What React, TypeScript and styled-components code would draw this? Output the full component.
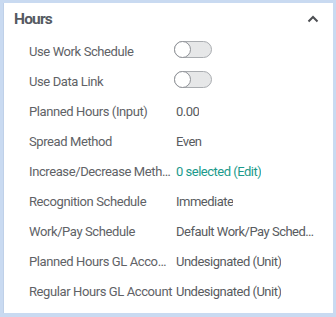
import React from 'react';
import styled, { createGlobalStyle } from 'styled-components';

const GlobalStyle = createGlobalStyle`
  html, body {
    margin: 0;
    padding: 0;
    background: #c9daf1;
  }
  body {
    font-family: Roboto, 'Liberation Sans', Arial, sans-serif;
  }
`;

// Outer frame, the blue around the card
const Frame = styled.div`
  padding: 3px;
  width: 336px;
  height: 317px;
  box-sizing: border-box;
`;

const Card = styled.section`
  background: #fff;
  height: 310px;
  box-sizing: border-box;
  border-left: 1px solid #bfd0e8;
  display: flex;
  flex-direction: column;
`;

const Header = styled.header`
  display: flex;
  align-items: center;
  justify-content: space-between;
  height: 33px;
  padding: 0 14px 0 10px;
`;

const Title = styled.h2`
  margin: 0;
  font-size: 15.5px;
  letter-spacing: -0.8px;
  font-weight: 700;
  color: #555a62;
  line-height: 1;
`;

const Chevron = styled.svg`
  width: 12px;
  height: 8px;
  margin-top: -2px;
`;

const Fields = styled.dl`
  margin: 0;
  padding: 0 15px 0 25px;
  display: grid;
  grid-template-columns: 147px 1fr;
  grid-auto-rows: 30px;
`;

const Label = styled.dt`
  font-size: 13px;
  letter-spacing: -0.4px;
  color: #606266;
  display: flex;
  align-items: center;
  padding-top: 1px;
  min-width: 0;
  span {
    white-space: nowrap;
    overflow: hidden;
    text-overflow: ellipsis;
    padding-right: 4px;
  }
`;

const Value = styled.dd<{ $link?: boolean }>`
  margin: 0;
  font-size: 13px;
  letter-spacing: -0.5px;
  color: ${p => (p.$link ? '#1b9a8b' : '#585b60')};
  display: flex;
  align-items: center;
  min-width: 0;
  span {
    white-space: nowrap;
    overflow: hidden;
    text-overflow: ellipsis;
  }
`;

const Toggle = styled.div`
  position: relative;
  width: 38px;
  height: 17px;
  box-sizing: border-box;
  border: 1px solid #a9acb0;
  border-radius: 9px;
  background: #e6e7e8;
  margin: -4px 0 0 -2px;
  &::before {
    content: '';
    position: absolute;
    left: -1px;
    top: -1px;
    width: 17px;
    height: 17px;
    box-sizing: border-box;
    border-radius: 50%;
    background: #fff;
    border: 1px solid #8e9196;
  }
`;

type Row = { label: string; value?: string; toggle?: boolean; link?: boolean };

const rows: Row[] = [
  { label: 'Use Work Schedule', toggle: true },
  { label: 'Use Data Link', toggle: true },
  { label: 'Planned Hours (Input)', value: '0.00' },
  { label: 'Spread Method', value: 'Even' },
  { label: 'Increase/Decrease Method', value: '0 selected (Edit)', link: true },
  { label: 'Recognition Schedule', value: 'Immediate' },
  { label: 'Work/Pay Schedule', value: 'Default Work/Pay Schedule' },
  { label: 'Planned Hours GL Account', value: 'Undesignated (Unit)' },
  { label: 'Regular Hours GL Account', value: 'Undesignated (Unit)' },
];

const App: React.FC = () => (
  <Frame>
    <GlobalStyle />
    <Card>
      <Header>
        <Title>Hours</Title>
        <Chevron viewBox="0 0 12 8">
          <path d="M1.5 6.5 L6 2 L10.5 6.5" fill="none" stroke="#4d4f53" strokeWidth="2" />
        </Chevron>
      </Header>
      <Fields>
        {rows.map(r => (
          <React.Fragment key={r.label}>
            <Label><span>{r.label}</span></Label>
            <Value $link={r.link}>
              {r.toggle ? <Toggle /> : <span>{r.value}</span>}
            </Value>
          </React.Fragment>
        ))}
      </Fields>
    </Card>
  </Frame>
);

export default App;
